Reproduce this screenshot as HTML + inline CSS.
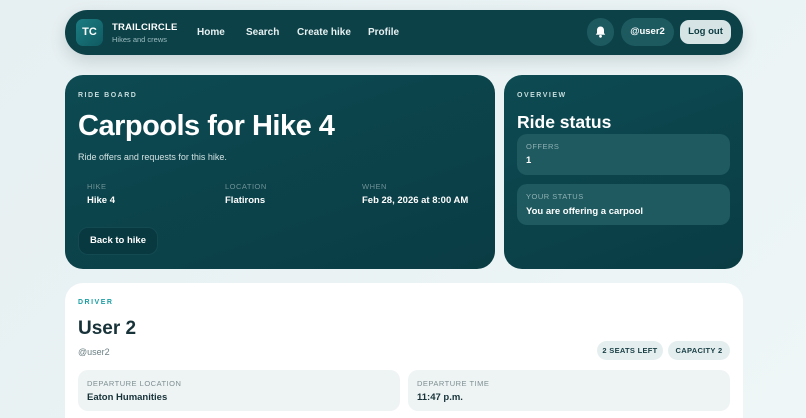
<!DOCTYPE html>
<html><head><meta charset="utf-8"><style>
*{box-sizing:border-box;margin:0;padding:0}
html,body{width:806px;height:418px;overflow:hidden}
body{background:linear-gradient(135deg,#e6eff1,#eef6f7);font-family:"Liberation Sans","DejaVu Sans",sans-serif;position:relative}
.nav{position:absolute;left:65px;top:10px;width:678px;height:45px;border-radius:23px;background:#0c4148;box-shadow:0 6px 16px rgba(0,40,50,.15)}
.logo{position:absolute;left:11px;top:9px;width:27px;height:27px;border-radius:7px;background:linear-gradient(135deg,#1b7d82,#0f5a61);color:#fff;font-weight:700;font-size:11px;text-align:center;line-height:27px}
.brand{position:absolute;left:47px;top:12px;color:#fff;font-weight:700;font-size:9.5px;letter-spacing:.2px}
.sub{position:absolute;left:47px;top:25px;color:#9bbcbf;font-size:7.5px}
.link{position:absolute;top:17px;color:#e6f0f0;font-weight:700;font-size:10px}
.pill{position:absolute;top:8px;height:28px;border-radius:14px;background:#1d5a60;color:#fff;font-weight:700;font-size:9.5px;text-align:center;line-height:28px}
.card{position:absolute;border-radius:18px;background:linear-gradient(160deg,#0d4a52,#0a3c44);color:#fff}
.eb{font-size:7px;font-weight:700;letter-spacing:1.5px;color:#c7dcdd}
.lbl{font-size:7.5px;color:#6e9296;letter-spacing:.5px}
.val{font-size:9.5px;font-weight:700;color:#fff}
.box{position:absolute;border-radius:10px;background:#1e5a60}
.w{position:absolute;left:65px;top:283px;width:678px;height:135px;background:#fff;border-radius:18px 18px 0 0}
.tag{position:absolute;top:58px;height:19px;border-radius:10px;background:#e5eeef;color:#173e44;font-weight:700;font-size:7.5px;line-height:19px;text-align:center;letter-spacing:.3px}
.g{position:absolute;top:87px;height:41px;border-radius:10px;background:#eef3f4}
</style></head><body>
<div class="nav">
<div class="logo">TC</div>
<div class="brand">TRAILCIRCLE</div>
<div class="sub">Hikes and crews</div>
<div class="link" style="left:132px">Home</div>
<div class="link" style="left:181px">Search</div>
<div class="link" style="left:232px">Create hike</div>
<div class="link" style="left:303px">Profile</div>
<div class="pill" style="left:522px;width:27px"><svg width="11" height="12" viewBox="0 0 11 12" style="margin-top:8px"><path d="M5.5 0.5C3.3 0.5 2 2.2 2 4.3V7L0.8 8.8H10.2L9 7V4.3C9 2.2 7.7 0.5 5.5 0.5Z" fill="#fff"/><circle cx="5.5" cy="10.3" r="1.4" fill="#fff"/></svg></div>
<div class="pill" style="left:556px;width:53px">@user2</div>
<div class="pill" style="left:615px;top:10px;height:24px;line-height:24px;width:51px;border-radius:9px;background:#d6e4e5;color:#0c3b42">Log out</div>
</div>

<div class="card" style="left:65px;top:75px;width:430px;height:194px">
<div class="eb" style="position:absolute;left:13px;top:17px">RIDE BOARD</div>
<div style="position:absolute;left:13px;top:35px;font-size:29px;font-weight:700;letter-spacing:-.5px">Carpools for Hike 4</div>
<div style="position:absolute;left:13px;top:77px;font-size:9px;color:#d2e2e3">Ride offers and requests for this hike.</div>
<div class="lbl" style="position:absolute;left:22px;top:107px">HIKE</div>
<div class="val" style="position:absolute;left:22px;top:120px">Hike 4</div>
<div class="lbl" style="position:absolute;left:160px;top:107px">LOCATION</div>
<div class="val" style="position:absolute;left:160px;top:120px">Flatirons</div>
<div class="lbl" style="position:absolute;left:297px;top:107px">WHEN</div>
<div class="val" style="position:absolute;left:297px;top:120px">Feb 28, 2026 at 8:00 AM</div>
<div style="position:absolute;left:13px;top:152px;width:80px;height:28px;border-radius:10px;background:#083840;border:1px solid #134a52;font-weight:700;font-size:9.5px;text-align:center;line-height:26px">Back to hike</div>
</div>

<div class="card" style="left:504px;top:75px;width:239px;height:194px">
<div class="eb" style="position:absolute;left:13px;top:17px">OVERVIEW</div>
<div style="position:absolute;left:13px;top:37px;font-size:17.5px;font-weight:700">Ride status</div>
<div class="box" style="left:13px;top:59px;width:213px;height:41px">
<div class="lbl" style="position:absolute;left:9px;top:8px;color:#8fb0b3">OFFERS</div>
<div class="val" style="position:absolute;left:9px;top:21px">1</div></div>
<div class="box" style="left:13px;top:109px;width:213px;height:41px">
<div class="lbl" style="position:absolute;left:9px;top:8px;color:#8fb0b3">YOUR STATUS</div>
<div class="val" style="position:absolute;left:9px;top:22px">You are offering a carpool</div></div>
</div>

<div class="w">
<div class="eb" style="position:absolute;left:13px;top:16px;color:#1a9ea3">DRIVER</div>
<div style="position:absolute;left:13px;top:35px;font-size:19px;font-weight:700;color:#173339">User 2</div>
<div style="position:absolute;left:13px;top:64px;font-size:9px;color:#6a7f83">@user2</div>
<div class="tag" style="left:532px;width:66px">2 SEATS LEFT</div>
<div class="tag" style="left:603px;width:62px">CAPACITY 2</div>
<div class="g" style="left:13px;width:322px"><div class="lbl" style="position:absolute;left:9px;top:9px;color:#7d8f92">DEPARTURE LOCATION</div><div style="position:absolute;left:9px;top:22px;font-size:9.5px;font-weight:700;color:#173339">Eaton Humanities</div></div>
<div class="g" style="left:343px;width:322px"><div class="lbl" style="position:absolute;left:9px;top:9px;color:#7d8f92">DEPARTURE TIME</div><div style="position:absolute;left:9px;top:22px;font-size:9.5px;font-weight:700;color:#173339">11:47 p.m.</div></div>
</div>
</body></html>
